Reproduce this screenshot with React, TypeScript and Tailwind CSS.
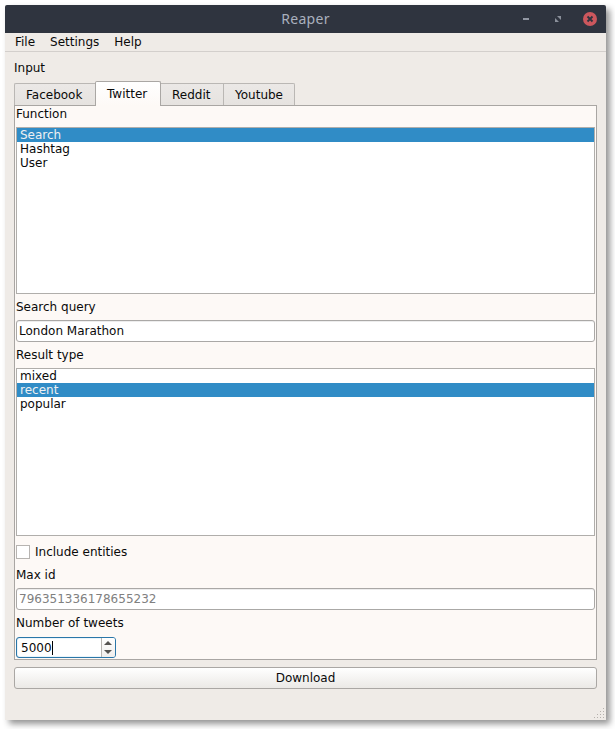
import type { ReactNode } from "react";

function List({ items, selected, className }: { items: string[]; selected: string; className: string }) {
  return (
    <ul className={`border border-[#b0aeab] bg-white ${className}`}>
      {items.map((item) => (
        <li
          key={item}
          className={`h-[14px] pl-[3px] leading-[14px] ${item === selected ? "bg-[#308cc6] text-[#eff0f1]" : ""}`}
        >
          {item}
        </li>
      ))}
    </ul>
  );
}

function Label({ children, className }: { children: ReactNode; className: string }) {
  return <div className={`flex items-center ${className}`}>{children}</div>;
}

function Tab({ name, className }: { name: string; className: string }) {
  return (
    <div
      className={`flex h-[22px] items-center border border-b-0 border-[#bab7b4] bg-linear-to-b from-[#ebe8e6] to-[#e6e3e0] ${className}`}
    >
      {name}
    </div>
  );
}

export default function App() {
  return (
    <div className="h-[729px] w-[615px] overflow-hidden bg-white pl-[5px] pt-[5px] font-['DejaVu_Sans',sans-serif] text-[12px] leading-[14px] text-[#0a0a0a]">
      <div className="flex h-[715px] w-[601px] flex-col rounded-t-[2px] bg-[#efebe7] shadow-[4px_4px_6px_rgba(0,0,0,0.42)]">
        <header className="relative flex h-[28px] shrink-0 items-center justify-center rounded-t-[2px] bg-[#2f343f] font-['Noto_Sans',sans-serif] text-[14px] tracking-[0.3px] text-[#a9b0bd]">
          <span>Reaper</span>
          <svg className="absolute right-0 top-0" width="96" height="28" viewBox="0 0 96 28">
            <rect x="13" y="13" width="6" height="2" fill="#9297a3" />
            <path d="M47 11h4v4zM45 13v4h4z" fill="#8b909b" />
            <circle cx="80" cy="14" r="7" fill="#cc575d" />
            <path d="M77.5 11.5l5 5m0-5l-5 5" stroke="#2f343f" strokeWidth="1.9" />
          </svg>
        </header>
        <nav className="flex h-[19px] shrink-0 items-center gap-[15px] border-b border-[#d3cfcc] pl-[10px]">
          <span>File</span>
          <span>Settings</span>
          <span>Help</span>
        </nav>
        <main className="flex flex-col pl-[9px] pr-[9px]">
          <Label className="h-[29px] pt-[3px]">Input</Label>
          <div className="z-10 -mb-px flex h-[25px] items-end">
            <Tab name="Facebook" className="mb-px w-[81px] rounded-tl-[2px] border-r-0 pl-[11px]" />
            <div className="flex h-[25px] w-[66px] items-center rounded-t-[2px] border border-b-0 border-[#aaa7a4] bg-linear-to-b from-white to-[#fdf9f6] pl-[11px]">
              Twitter
            </div>
            <Tab name="Reddit" className="mb-px w-[63px] border-l-0 pl-[11px]" />
            <Tab name="Youtube" className="mb-px w-[71px] rounded-tr-[2px] border-l-0 pl-[11px]" />
          </div>
          <section className="flex h-[555px] flex-col border border-[#a9a6a3] bg-[#fdf9f6] px-px">
            <Label className="h-[21px] pb-[5px]">Function</Label>
            <List items={["Search", "Hashtag", "User"]} selected="Search" className="h-[167px]" />
            <Label className="h-[26px]">Search query</Label>
            <div className="flex h-[22px] items-center rounded-[3px] border border-[#aaa8a6] bg-white pl-[2px] shadow-[inset_0_1px_0_#ededed]">
              London Marathon
            </div>
            <Label className="h-[26px]">Result type</Label>
            <List items={["mixed", "recent", "popular"]} selected="recent" className="h-[168px]" />
            <div className="mt-[9px] flex h-[14px] items-center gap-[5px]">
              <span className="size-[14px] border border-[#b7b4b1] bg-white" />
              <span>Include entities</span>
            </div>
            <Label className="h-[29px] pt-[3px]">Max id</Label>
            <div className="flex h-[22px] items-center rounded-[3px] border border-[#aaa8a6] bg-white pl-[2px] text-[#808080] shadow-[inset_0_1px_0_#ededed]">
              796351336178655232
            </div>
            <Label className="h-[27px] pb-[2px]">Number of tweets</Label>
            <div className="flex h-[21px] w-[100px] rounded-[3px] border border-[#2a76a8] bg-white shadow-[inset_0_0_1px_#308cc6]">
              <div className="flex w-[84px] items-center pl-[4px]">
                <span>5000</span>
                <span className="h-[14px] w-px bg-black" />
              </div>
              <div className="flex flex-1 items-center justify-center rounded-r-[2px] border-l border-[#b7b4b1] bg-linear-to-b from-white to-[#f0eeec]">
                <svg width="13" height="19" viewBox="0 0 13 19">
                  <path d="M2 7l4-4 4 4zM2 12h8l-4 4z" fill="#555350" />
                </svg>
              </div>
            </div>
          </section>
          <button className="mt-[7px] flex h-[22px] items-center justify-center rounded-[3px] border border-[#aaa7a4] bg-linear-to-b from-white to-[#ebe9e6]">
            Download
          </button>
        </main>
        <footer className="mt-auto flex justify-end pb-[2px] pr-[2px]">
          <svg width="10" height="10" viewBox="0 0 10 10" fill="#b5b1ad">
            <path d="M9 0h1v1h-1zM6 3h1v1h-1zM9 3h1v1h-1zM3 6h1v1h-1zM6 6h1v1h-1zM9 6h1v1h-1zM0 9h1v1h-1zM3 9h1v1h-1zM6 9h1v1h-1zM9 9h1v1h-1z" />
          </svg>
        </footer>
      </div>
    </div>
  );
}
